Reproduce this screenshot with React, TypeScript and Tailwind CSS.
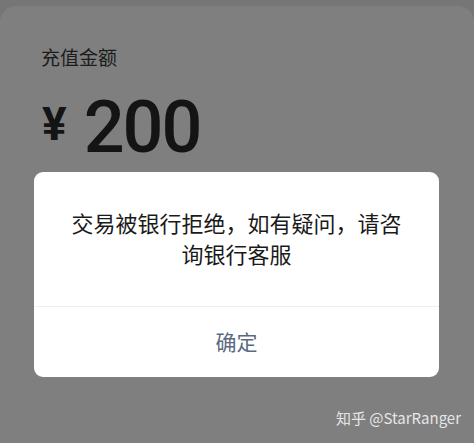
export default function App() {
  const cjk = { fontFamily: '"Noto Sans CJK SC", "Noto Sans", sans-serif' };
  return (
    <div className="w-[474px] h-[443px] bg-[#767676] overflow-hidden pt-[6px]" style={cjk}>
      <div className="h-[437px] bg-[#7f7f7f] rounded-t-[16px] flex flex-col">
        <div className="pl-[41px] pt-[38px] text-[19px] leading-[26px] text-[#1c1c1c]">充值金额</div>
        <div className="pl-[42px] mt-[26px] flex items-center h-[64px] text-[#141414]">
          <span className="text-[46px] font-bold leading-none font-['Roboto'] mr-[17px] -mt-[8px]">¥</span>
          <span className="text-[72px] font-medium leading-none font-['Roboto'] tracking-[-2px]">200</span>
        </div>
        <div className="mx-[34px] mt-[12px] w-[405px] bg-white rounded-[9px] flex flex-col">
          <div className="h-[134px] flex flex-col items-center pt-[35px] text-[22px] leading-[31px] text-[#1a1a1a] text-center px-[20px]">
            <div>交易被银行拒绝，如有疑问，请咨</div>
            <div>询银行客服</div>
          </div>
          <div className="h-px bg-[#efefef]" />
          <div className="h-[70px] flex items-center justify-center text-[21px] text-[#5a6a80]">确定</div>
        </div>
        <div className="flex justify-end pr-[13px] mt-[32px] text-[15px] leading-[18px] text-[#e6e6e6]">
          <span>知乎 @StarRanger</span>
        </div>
      </div>
    </div>
  );
}
